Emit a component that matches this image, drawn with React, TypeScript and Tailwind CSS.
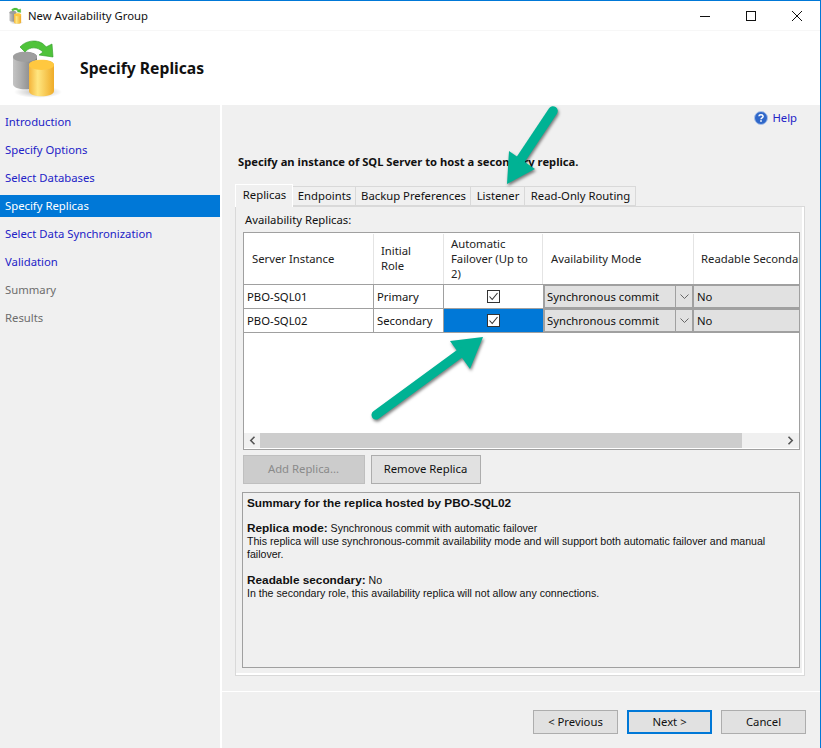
import React from "react";

const font = "font-['Noto_Sans','Open_Sans',sans-serif]";

function DbIcon({ small = false }: { small?: boolean }) {
  const id = small ? "s" : "b";
  return (
    <svg width={small ? 16 : 56} height={small ? 18 : 62} viewBox="0 0 56 62">
      <defs>
        <linearGradient id={`g${id}`} x1="0" x2="1" y1="0" y2="0">
          <stop offset="0" stopColor="#c4c4c4" />
          <stop offset="0.3" stopColor="#b0b0b0" />
          <stop offset="1" stopColor="#777777" />
        </linearGradient>
        <linearGradient id={`y${id}`} x1="0" x2="1" y1="0" y2="0">
          <stop offset="0" stopColor="#f4b43a" />
          <stop offset="0.35" stopColor="#ffe680" />
          <stop offset="1" stopColor="#efab28" />
        </linearGradient>
        <radialGradient id={`sh${id}`}>
          <stop offset="0" stopColor="#000" stopOpacity="0.28" />
          <stop offset="1" stopColor="#000" stopOpacity="0" />
        </radialGradient>
      </defs>
      <ellipse cx="30" cy="54" rx="24" ry="6" fill={`url(#sh${id})`} />
      <path d="M5 19 C5 12 29 12 29 19 V46 C29 53 5 53 5 46 Z" fill={`url(#g${id})`} />
      <ellipse cx="17" cy="19" rx="12" ry="5" fill="#9e9e9e" />
      <path d="M21 27 C21 20 46 20 46 27 V53 C46 60 21 60 21 53 Z" fill={`url(#y${id})`} />
      <ellipse cx="33.5" cy="27" rx="12.5" ry="5" fill="#ffc83f" />
      <path d="M12 9 C19 1 33 1 38 9 L44 6 L45 19 L31 17 L35 14 C30 9 22 8 17 14 Z" fill="#4fc33a" stroke="#2e9a25" strokeWidth="0.6" />
    </svg>
  );
}

function HelpIcon() {
  return (
    <svg width="14" height="14" viewBox="0 0 14 14">
      <circle cx="7" cy="7" r="6.5" fill="#2f67c9" stroke="#a9c2ea" />
      <path d="M4.9 5.3 C5 3.4 9 3.3 9.1 5.4 C9.1 6.9 7 6.8 7 8.3" fill="none" stroke="#fff" strokeWidth="1.5" />
      <rect x="6.2" y="9.2" width="1.6" height="1.6" fill="#fff" />
    </svg>
  );
}

function Check() {
  return (
    <div className="w-[13px] h-[13px] bg-white border border-[#333333] flex items-center justify-center">
      <svg width="11" height="11" viewBox="0 0 11 11">
        <path d="M1.5 5.5 L4.2 8.5 L9.5 2" fill="none" stroke="#333333" strokeWidth="1.1" />
      </svg>
    </div>
  );
}

const nav: [string, boolean, boolean][] = [
  ["Introduction", true, false],
  ["Specify Options", true, false],
  ["Select Databases", true, false],
  ["Specify Replicas", false, true],
  ["Select Data Synchronization", true, false],
  ["Validation", true, false],
  ["Summary", false, false],
  ["Results", false, false],
];

const tabs: [string, string][] = [
  ["Endpoints", "w-[63px]"],
  ["Backup Preferences", "w-[115px]"],
  ["Listener", "w-[54px]"],
  ["Read-Only Routing", "w-[111px]"],
];

function Row({ name, role, selected }: { name: string; role: string; selected?: boolean }) {
  return (
    <div className="flex h-[24px] border-b border-[#a0a0a0] text-[11.3px] text-[#111]">
      <div className="w-[130px] pl-[3px] pt-px flex items-center border-r border-[#a0a0a0]">{name}</div>
      <div className="w-[70px] pl-[3px] pt-px flex items-center border-r border-[#a0a0a0]">{role}</div>
      <div className={`w-[99px] flex items-center justify-center ${selected ? "bg-[#0078d7]" : ""}`}>
        <Check />
      </div>
      <div className="w-[151px] flex border-2 border-[#a0a0a0] bg-[#e1e1e1] -my-px">
        <div className="flex-1 pl-[2px] pt-px flex items-center">Synchronous commit</div>
        <div className="w-[17px] border-l border-[#a0a0a0] flex items-center justify-center">
          <svg width="9" height="6" viewBox="0 0 9 6">
            <path d="M0.5 0.5 L4.5 4.5 L8.5 0.5" fill="none" stroke="#666" strokeWidth="1" />
          </svg>
        </div>
      </div>
      <div className="flex-1 flex items-center pl-[3px] pt-px bg-[#e1e1e1] border-y-2 border-[#a0a0a0] -my-px">No</div>
    </div>
  );
}

function FooterBtn({ label, primary }: { label: string; primary?: boolean }) {
  return (
    <div
      className={`w-[85px] h-[24px] pt-px flex items-center justify-center bg-[#e1e1e1] text-[11.3px] text-[#111] ${
        primary ? "border-2 border-[#0078d7]" : "border border-[#adadad]"
      }`}
    >
      {label}
    </div>
  );
}

export default function App() {
  return (
    <div className={`${font} relative w-[821px] h-[748px] overflow-hidden bg-white border-t border-r border-[#0078d7]`}>
      {/* Title bar */}
      <div className="h-[30px] flex items-center bg-white border-b border-[#f7f7f7]">
        <div className="ml-[8px] mt-[1px]">
          <DbIcon small />
        </div>
        <div className="ml-[4px] mt-[1px] text-[11.3px] text-[#111]">New Availability Group</div>
        <div className="ml-auto flex items-center">
          <svg width="12" height="12" viewBox="0 0 12 12" className="mr-[34px]">
            <path d="M1 6.5 H11" stroke="#111" fill="none" />
          </svg>
          <svg width="12" height="12" viewBox="0 0 12 12" className="mr-[34px]">
            <rect x="1.5" y="1.5" width="9" height="9" stroke="#111" fill="none" />
          </svg>
          <svg width="12" height="12" viewBox="0 0 12 12" className="mr-[17px]">
            <path d="M1 1 L11 11 M11 1 L1 11" stroke="#111" fill="none" />
          </svg>
        </div>
      </div>
      {/* Header */}
      <div className="h-[74px] flex items-center bg-white">
        <div className="ml-[8px] mt-[2px]">
          <DbIcon />
        </div>
        <div className="ml-[16px] mt-[2px] text-[15.7px] font-bold text-[#111]">Specify Replicas</div>
      </div>
      {/* Body */}
      <div className="flex h-[643px]">
        <div className="w-[220px] bg-[#f0f0f0] pt-[3px] shrink-0">
          {nav.map(([label, link, sel]) => (
            <div key={label} className="h-[28px] flex items-center">
              <div
                className={`w-full h-[22px] pl-[5px] pt-px flex items-center text-[11.3px] ${
                  sel ? "bg-[#0078d7] text-white" : link ? "text-[#2323c7]" : "text-[#6d6d6d]"
                }`}
              >
                {label}
              </div>
            </div>
          ))}
        </div>
        <div className="flex-1 ml-[2px] bg-[#f0f0f0] flex flex-col">
          <div className="h-[587px] border-b border-white pl-[13px] flex flex-col">
            <div className="h-[26px] flex items-center justify-end pr-[23px] gap-[4px]">
              <HelpIcon />
              <span className="text-[11.3px] text-[#2323c7]">Help</span>
            </div>
            <div className="mt-[21px] pl-[3px] h-[20px] flex items-center text-[11.2px] font-bold text-[#111]">
              Specify an instance of SQL Server to host a secondary replica.
            </div>
            {/* Tabs */}
            <div className="mt-[11px] h-[23px] flex items-end relative z-10">
              <div className="w-[58px] h-[23px] -mb-px pb-[2px] pl-px bg-[#f0f0f0] border border-b-0 border-white flex items-center justify-center text-[11.3px] text-[#111]">
                Replicas
              </div>
              {tabs.map(([t, w]) => (
                <div
                  key={t}
                  className={`${w} h-[20px] pl-px bg-[#f0f0f0] border border-l-0 border-[#d9d9d9] flex items-center justify-center text-[11.3px] text-[#111] whitespace-nowrap`}
                >
                  {t}
                </div>
              ))}
            </div>
            {/* Panel */}
            <div className="w-[570px] h-[470px] border border-[#d9d9d9] shadow-[inset_-2px_-2px_0_#ffffff] bg-[#f0f0f0] px-[7px] flex flex-col">
              <div className="h-[25px] pl-[2px] pt-px flex items-center text-[11.3px] text-[#111]">Availability Replicas:</div>
              {/* Grid */}
              <div className="w-[557px] h-[218px] border border-[#a0a0a0] bg-white flex flex-col overflow-hidden">
                <div className="flex h-[52px] pt-px border-b border-[#a0a0a0] text-[11.3px] text-[#222] shrink-0">
                  <div className="w-[130px] pl-[8px] flex items-center border-r border-[#e4e4e4]">Server Instance</div>
                  <div className="w-[70px] pl-[7px] pb-[2px] flex items-center border-r border-[#e4e4e4] leading-[15px]">
                    <div>
                      Initial
                      <br />
                      Role
                    </div>
                  </div>
                  <div className="w-[99px] pl-[7px] pb-[2px] flex items-center border-r border-[#e4e4e4] leading-[15px]">
                    <div>
                      Automatic
                      <br />
                      Failover (Up to
                      <br />
                      2)
                    </div>
                  </div>
                  <div className="w-[151px] pl-[8px] flex items-center border-r border-[#e4e4e4]">Availability Mode</div>
                  <div className="flex-1 pl-[7px] flex items-center whitespace-nowrap overflow-hidden">Readable Secondary</div>
                </div>
                <Row name="PBO-SQL01" role="Primary" />
                <Row name="PBO-SQL02" role="Secondary" selected />
                <div className="flex-1" />
                {/* Scrollbar */}
                <div className="h-[15px] mb-px flex bg-[#f0f0f0] shrink-0">
                  <div className="w-[16px] flex items-center justify-center">
                    <svg width="7" height="9" viewBox="0 0 7 9">
                      <path d="M5.5 0.8 L1.8 4.5 L5.5 8.2" fill="none" stroke="#555" strokeWidth="1.6" />
                    </svg>
                  </div>
                  <div className="w-[482px] bg-[#cdcdcd]" />
                  <div className="flex-1 flex items-center justify-end pr-[5px]">
                    <svg width="7" height="9" viewBox="0 0 7 9">
                      <path d="M1.5 0.8 L5.2 4.5 L1.5 8.2" fill="none" stroke="#555" strokeWidth="1.6" />
                    </svg>
                  </div>
                </div>
              </div>
              {/* Buttons */}
              <div className="mt-[5px] flex gap-[6px]">
                <div className="w-[122px] h-[29px] pr-px bg-[#cccccc] border border-[#bfbfbf] flex items-center justify-center text-[11.3px] text-[#8a8a8a]">
                  Add Replica...
                </div>
                <div className="w-[110px] h-[29px] pr-px bg-[#e1e1e1] border border-[#adadad] flex items-center justify-center text-[11.3px] text-[#111]">
                  Remove Replica
                </div>
              </div>
              {/* Summary */}
              <div className="mt-[8px] -ml-px w-[558px] h-[176px] border border-[#a0a0a0] pl-[4px] pr-[8px] font-['Liberation_Sans',sans-serif] text-[10.6px] leading-[13px] text-[#111]">
                <div className="mt-[3px] font-bold text-[11.8px] leading-[14px]">Summary for the replica hosted by PBO-SQL02</div>
                <div className="mt-[12px]">
                  <span className="font-bold text-[11.8px]">Replica mode:</span> Synchronous commit with automatic failover
                </div>
                <div>
                  This replica will use synchronous-commit availability mode and will support both automatic failover and manual failover.
                </div>
                <div className="mt-[13px]">
                  <span className="font-bold text-[11.8px]">Readable secondary:</span> No
                </div>
                <div>In the secondary role, this availability replica will not allow any connections.</div>
              </div>
            </div>
          </div>
          <div className="flex-1 flex justify-end gap-[9px] pr-[14px] pt-[18px]">
            <FooterBtn label="< Previous" />
            <FooterBtn label="Next >" primary />
            <FooterBtn label="Cancel" />
          </div>
        </div>
      </div>
      {/* Annotation arrows */}
      <svg
        className="absolute left-0 top-0 pointer-events-none z-20 drop-shadow-[1px_2px_1.5px_rgba(0,0,0,0.5)]"
        width="821"
        height="748"
        viewBox="0 0 821 748"
      >
        <path d="M507 183 L509 150 L535 168 Z" fill="#00b294" />
        <path d="M553 110 L521 158" stroke="#00b294" strokeWidth="9.5" strokeLinecap="round" fill="none" />
        <path d="M483 336 L450 340 L470 368 Z" fill="#00b294" />
        <path d="M376 414 L462 351" stroke="#00b294" strokeWidth="9" strokeLinecap="round" fill="none" />
      </svg>
    </div>
  );
}
